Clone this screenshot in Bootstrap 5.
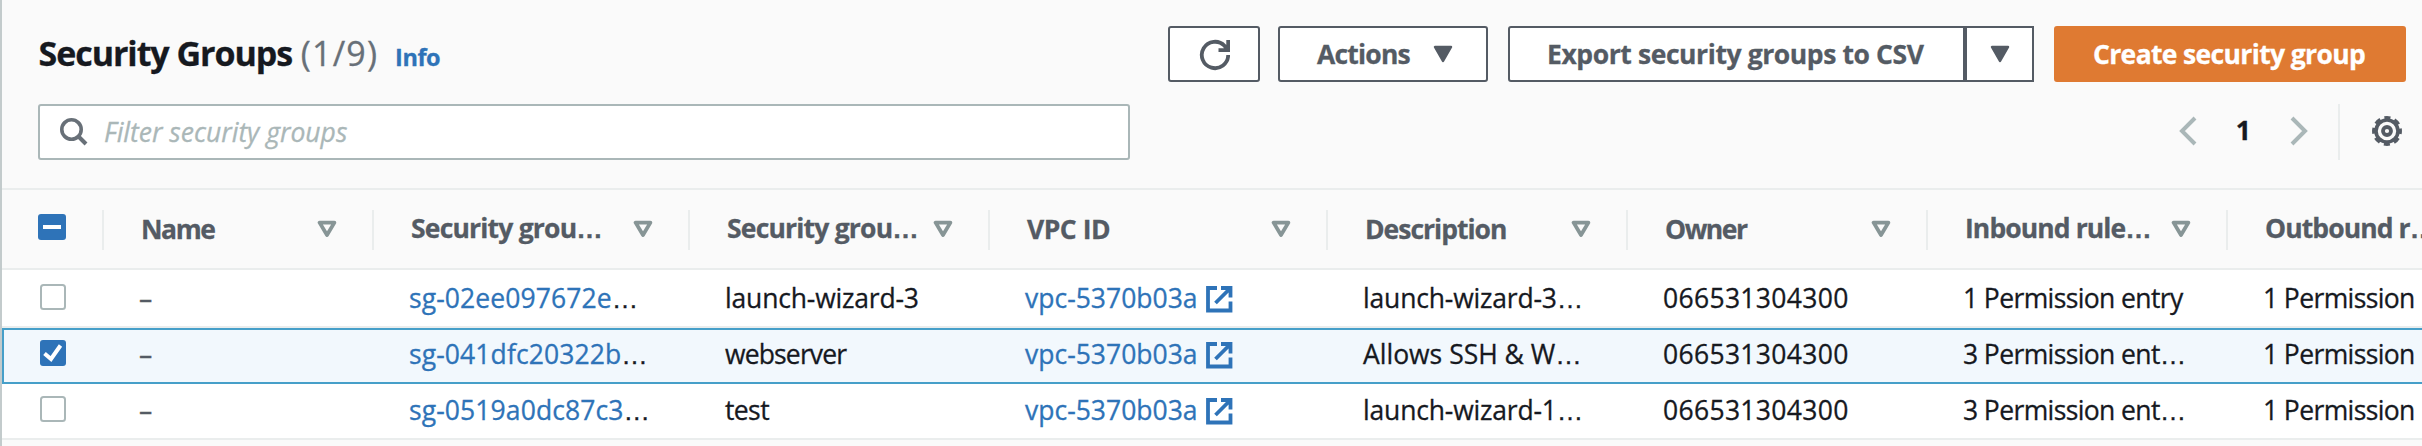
<!DOCTYPE html>
<html lang="en">
<head>
<meta charset="utf-8">
<title>Security Groups</title>
<link href="https://cdn.jsdelivr.net/npm/bootstrap@5.3.0/dist/css/bootstrap.min.css" rel="stylesheet">
<style>
  body { font-family: "Open Sans", "Noto Sans", sans-serif; font-size: 26.5px; line-height: 36px; color: #16191f; background: #fafafa; overflow: hidden; height: 446px; -webkit-text-stroke: .3px currentColor; }
  .panel { border-left: 2px solid #c3cbcc; height: 446px; overflow: hidden; }
  .head-bar { height: 104px; padding: 26px 16px 0 36.5px; }
  .page-title { font-size: 34px; line-height: 44px; font-weight: 700; letter-spacing: -1.05px; margin: 5px 0 0; }
  .counter { font-weight: 400; color: #687078; letter-spacing: 1.2px; margin-left: 1px; }
  .info { font-size: 23.5px; font-weight: 700; color: #2e73b8; text-decoration: none; letter-spacing: -.4px; margin-left: 9px; }
  .aws-btn { height: 56px; border: 2px solid #545b64; border-radius: 3px; background: #fff; color: #545b64; font-size: 26.5px; line-height: 36px; font-weight: 700; padding: 0; letter-spacing: -.41px; display: flex; align-items: center; }
  .aws-btn.orange { background: #df7a32; border-color: #df7a32; color: #fff; letter-spacing: -.65px; width: 352px; padding-left: 37px; margin-left: 20px; }
  .refresh { width: 92px; }
  .actions { width: 210px; margin-left: 18px; padding: 0 33px 0 37px; }
  .export { width: 457px; padding-left: 37px; }
  .more { width: 69px; }
  .tool-row { height: 84px; padding: 0 16px 0 36px; }
  .search { width: 1092px; height: 56px; background: #fff; border: 2px solid #aab7b8; border-radius: 3px; padding-left: 20px; }
  .search input { border: 0; outline: 0; padding: 0; width: 900px; margin-left: 16px; font-style: italic; background: transparent; }
  .search input::placeholder { color: #aab7b8; opacity: 1; }
  .pager { height: 54px; }
  .pager b { margin: 0 39px 2px 39px; }
  .pager .gear { margin-right: 4px; }
  .sep { width: 2px; height: 56px; background: #eaeded; margin: 2px 32px 0 30px; }
  .grid { table-layout: fixed; width: 2526px; border-collapse: separate; border-spacing: 0; margin: 0; }
  .grid th { height: 82px; border-top: 2px solid #eaeded; border-bottom: 2px solid #eaeded; padding: 2px 0 0 37px; color: #545b64; background: #fafafa; font-weight: 700; vertical-align: middle; }
  .grid th .cell { height: 40px; display: flex; align-items: center; justify-content: space-between; border-right: 2px solid #eaeded; padding-right: 35px; white-space: nowrap; }
  .grid th .cell > span { margin-bottom: 3px; }
  .grid th .cell > svg { margin-bottom: 2px; }
  .grid th:first-child .cell > svg { margin-bottom: 6px; }
  .grid th:first-child, .grid td:first-child { padding-left: 36px; }
  .grid td { height: 58px; background: #fff; border-bottom: 2px solid #eaeded; padding: 0 0 0 35px; white-space: nowrap; vertical-align: middle; }
  .grid tr.chosen td { height: 56px; background: #f2f8fd; border-top: 2px solid #469fc9; border-bottom: 2px solid #469fc9; padding-bottom: 4px; }
  .grid tr.chosen td:first-child { border-left: 2px solid #469fc9; padding-left: 34px; }
  .grid tr.last td { height: 56px; padding-bottom: 2px; }
  .grid a { color: #2e73b8; text-decoration: none; }
  .grid svg, .aws-btn svg, .search svg, .pager svg { display: block; flex: none; }
  .check { margin: 0 0 2px 2px; }
  .ext { margin: 1px 0 0 7px; }
  .el { font-family: "Liberation Sans", sans-serif; letter-spacing: 0; }
  .grid .dash { color: #545b64; font-weight: 500; }
  .t1 { letter-spacing: .1px; } .t3 { letter-spacing: .32px; }
  .n6 { letter-spacing: -.61px; } .n2 { letter-spacing: -.18px; } .n9 { letter-spacing: -.85px; }
  .h5b { letter-spacing: -.5px; } .h8b { letter-spacing: -.8px; } .h9b { letter-spacing: -.9px; } .h10b { letter-spacing: -1px; } .h14b { letter-spacing: -1.45px; }
</style>
</head>
<body>
<svg width="0" height="0" class="position-absolute" aria-hidden="true">
  <symbol id="tri" viewBox="0 0 20 18"><path d="M2 2h16l-8 14z" fill="#545b64" stroke="#545b64" stroke-width="2.5" stroke-linejoin="round"/></symbol>
  <symbol id="sort" viewBox="0 0 20 18"><path d="M2.600 2.600h14.800L10 15z" fill="none" stroke="#879596" stroke-width="3.800" stroke-linejoin="round"/></symbol>
  <symbol id="ext" viewBox="0 0 28 28"><path d="M12 3H3v22.500h22.500V16.500M16 3h9.500V12.500M25 3.500L10.500 18" fill="none" stroke="#2e73b8" stroke-width="3.800"/></symbol>
  <symbol id="box" viewBox="0 0 26 26"><rect x="1" y="1" width="24" height="24" rx="2.500" fill="#fff" stroke="#aab7b8" stroke-width="2"/></symbol>
</svg>
<main class="panel">
  <header class="head-bar d-flex justify-content-between align-items-start">
    <h1 class="page-title">Security Groups <span class="counter">(1/9)</span> <a class="info" href="#">Info</a></h1>
    <div class="d-flex">
      <button class="aws-btn refresh justify-content-center" aria-label="Refresh"><svg width="32" height="34" viewBox="0 0 32 34"><path d="M30.200 18A13.200 13.200 0 1 1 26.500 8.800L29 12M30.200 3v10.200H20.500" fill="none" stroke="#545b64" stroke-width="3.800"/></svg></button>
      <button class="aws-btn actions justify-content-between"><span class="h8b">Actions</span><svg width="20" height="18"><use href="#tri"/></svg></button>
      <div class="d-flex" style="margin-left:20px">
        <button class="aws-btn export rounded-end-0">Export security groups to CSV</button>
        <button class="aws-btn more rounded-0 justify-content-center" aria-label="More export options"><svg width="20" height="18"><use href="#tri"/></svg></button>
      </div>
      <button class="aws-btn orange">Create security group</button>
    </div>
  </header>
  <div class="tool-row d-flex justify-content-between">
    <div class="search d-flex align-items-center">
      <svg width="28" height="28" viewBox="0 0 28 28"><circle cx="11.500" cy="11.500" r="9.700" fill="none" stroke="#687078" stroke-width="3.600"/><path d="M18.500 18.500l7.500 7.500" stroke="#687078" stroke-width="4"/></svg>
      <input type="text" placeholder="Filter security groups">
    </div>
    <div class="pager d-flex align-items-center">
      <svg width="18" height="30" viewBox="0 0 18 30"><path d="M16 2L3 15l13 13" fill="none" stroke="#aab7b8" stroke-width="4"/></svg>
      <b>1</b>
      <svg width="18" height="30" viewBox="0 0 18 30"><path d="M2 2l13 13L2 28" fill="none" stroke="#aab7b8" stroke-width="4"/></svg>
      <span class="sep"></span>
      <svg class="gear" width="30" height="30" viewBox="0 0 30 30"><g fill="none" stroke="#545b64"><circle cx="15" cy="15" r="11" stroke-width="3.600"/><circle cx="15" cy="15" r="13.200" stroke-width="3.500" stroke-dasharray="6 4.367" stroke-dashoffset="3"/><circle cx="15" cy="15" r="4" stroke-width="3.800"/></g></svg>
    </div>
  </div>
  <table class="grid">
    <colgroup><col style="width:102px"><col style="width:270px"><col style="width:316px"><col style="width:300px"><col style="width:338px"><col style="width:300px"><col style="width:300px"><col style="width:300px"><col style="width:300px"></colgroup>
    <thead>
      <tr>
        <th><div class="cell"><svg width="28" height="26" viewBox="0 0 28 26"><rect width="28" height="26" rx="3" fill="#2e73b8"/><path d="M5 13h18" stroke="#fff" stroke-width="4"/></svg></div></th>
        <th><div class="cell"><span class="h14b">Name</span><svg width="20" height="18"><use href="#sort"/></svg></div></th>
        <th><div class="cell"><span class="h8b">Security grou<span class="el">…</span></span><svg width="20" height="18"><use href="#sort"/></svg></div></th>
        <th><div class="cell"><span class="h8b">Security grou<span class="el">…</span></span><svg width="20" height="18"><use href="#sort"/></svg></div></th>
        <th><div class="cell"><span class="h5b">VPC ID</span><svg width="20" height="18"><use href="#sort"/></svg></div></th>
        <th><div class="cell"><span class="h10b">Description</span><svg width="20" height="18"><use href="#sort"/></svg></div></th>
        <th><div class="cell"><span class="h14b">Owner</span><svg width="20" height="18"><use href="#sort"/></svg></div></th>
        <th><div class="cell"><span class="h9b">Inbound rule<span class="el">…</span></span><svg width="20" height="18"><use href="#sort"/></svg></div></th>
        <th><div class="cell"><span class="h9b">Outbound r<span class="el">…</span></span></div></th>
      </tr>
    </thead>
    <tbody>
      <tr>
        <td><svg class="check" width="26" height="26"><use href="#box"/></svg></td>
        <td class="dash">–</td>
        <td><a class="t1" href="#">sg-02ee097672e</a><span class="el">…</span></td>
        <td class="n2">launch-wizard-3</td>
        <td><div class="d-flex align-items-center"><a href="#">vpc-5370b03a</a><svg class="ext" width="28" height="28"><use href="#ext"/></svg></div></td>
        <td class="n2">launch-wizard-3<span class="el">…</span></td>
        <td class="t3">066531304300</td>
        <td class="n6">1 Permission entry</td>
        <td class="n6">1 Permission</td>
      </tr>
      <tr class="chosen">
        <td><svg class="check" width="26" height="26" viewBox="0 0 26 26"><rect width="26" height="26" rx="3" fill="#2e73b8"/><path d="M4.500 13.500l6.500 5.500L20.500 5.500" fill="none" stroke="#fff" stroke-width="4"/></svg></td>
        <td class="dash">–</td>
        <td><a class="t1" href="#">sg-041dfc20322b</a><span class="el">…</span></td>
        <td class="n9">webserver</td>
        <td><div class="d-flex align-items-center"><a href="#">vpc-5370b03a</a><svg class="ext" width="28" height="28"><use href="#ext"/></svg></div></td>
        <td>Allows SSH &amp; W<span class="el">…</span></td>
        <td class="t3">066531304300</td>
        <td class="n6">3 Permission ent<span class="el">…</span></td>
        <td class="n6">1 Permission</td>
      </tr>
      <tr class="last">
        <td><svg class="check" width="26" height="26"><use href="#box"/></svg></td>
        <td class="dash">–</td>
        <td><a class="t1" href="#">sg-0519a0dc87c3</a><span class="el">…</span></td>
        <td class="n6">test</td>
        <td><div class="d-flex align-items-center"><a href="#">vpc-5370b03a</a><svg class="ext" width="28" height="28"><use href="#ext"/></svg></div></td>
        <td class="n2">launch-wizard-1<span class="el">…</span></td>
        <td class="t3">066531304300</td>
        <td class="n6">3 Permission ent<span class="el">…</span></td>
        <td class="n6">1 Permission</td>
      </tr>
    </tbody>
  </table>
</main>
<script src="https://cdn.jsdelivr.net/npm/bootstrap@5.3.0/dist/js/bootstrap.bundle.min.js"></script>
</body>
</html>
